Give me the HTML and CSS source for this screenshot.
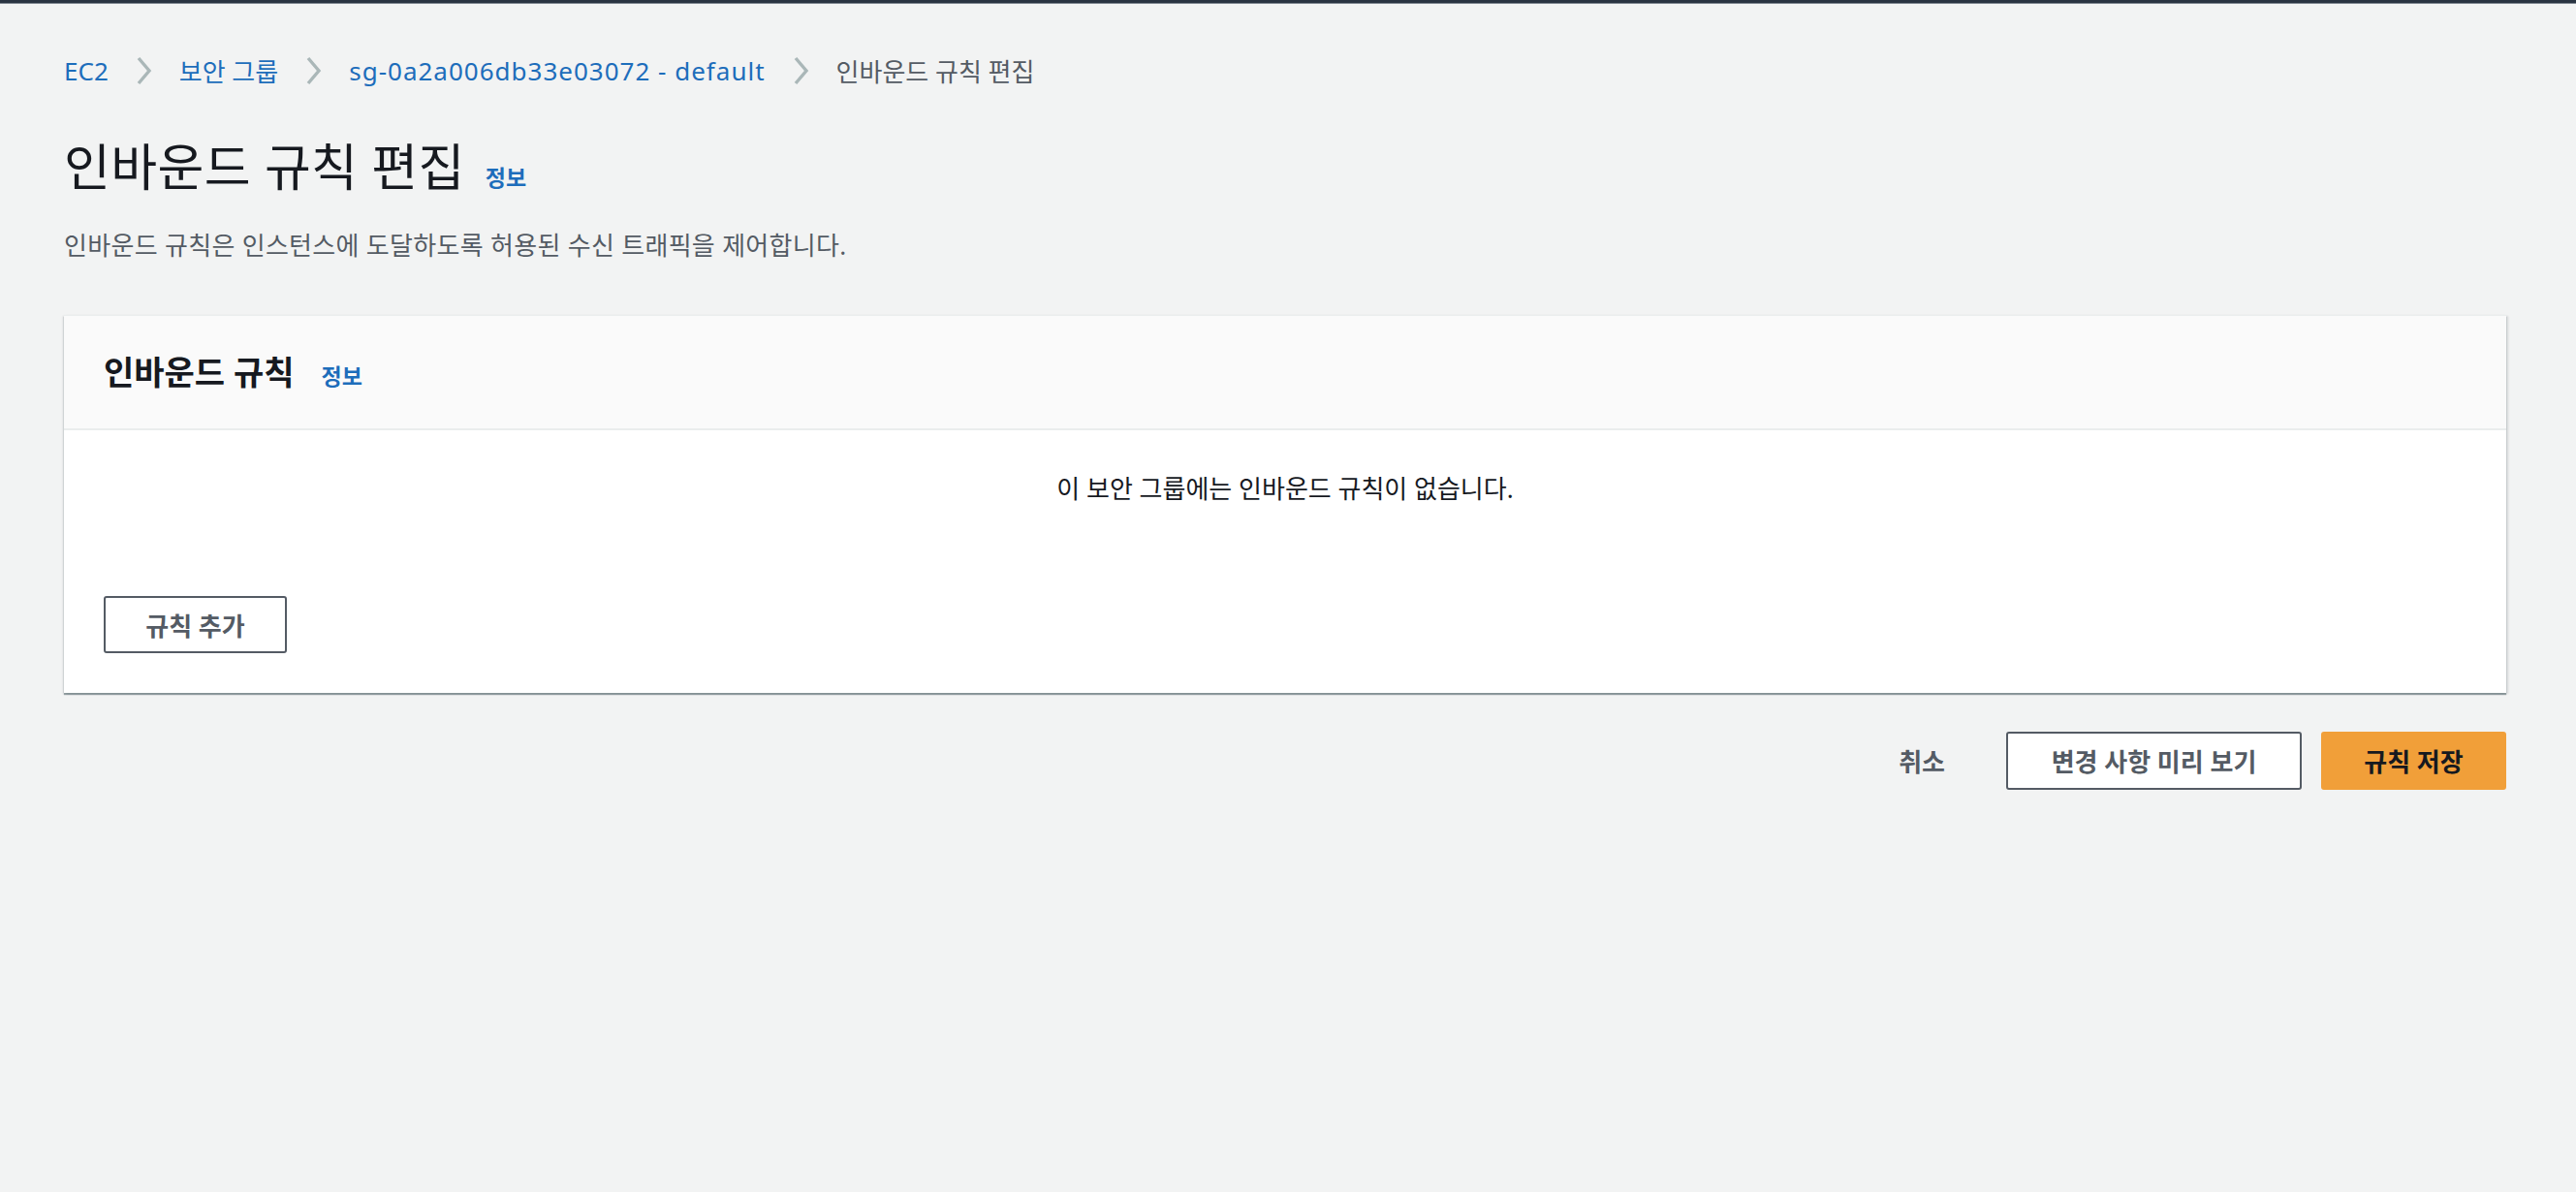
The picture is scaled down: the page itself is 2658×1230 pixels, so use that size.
FILE: index.html
```html
<!DOCTYPE html>
<html lang="ko">
<head>
<meta charset="utf-8">
<title>인바운드 규칙 편집</title>
<link rel="stylesheet" href="styles.css">
</head>
<body>
<div class="topbar"></div>
<main class="main">
  <nav class="breadcrumb">
    <a class="crumb-link" href="#">EC2</a>
    <svg class="chev" width="17" height="30" viewBox="0 0 17 30"><polyline points="3,2 14,15 3,28" fill="none" stroke="#aab7b8" stroke-width="3.4"/></svg>
    <a class="crumb-link" href="#">보안 그룹</a>
    <svg class="chev" width="17" height="30" viewBox="0 0 17 30"><polyline points="3,2 14,15 3,28" fill="none" stroke="#aab7b8" stroke-width="3.4"/></svg>
    <a class="crumb-link crumb-id" href="#">sg-0a2a006db33e03072 - default</a>
    <svg class="chev" width="17" height="30" viewBox="0 0 17 30"><polyline points="3,2 14,15 3,28" fill="none" stroke="#aab7b8" stroke-width="3.4"/></svg>
    <span class="crumb-current">인바운드 규칙 편집</span>
  </nav>

  <div class="page-head">
    <h1 class="title">인바운드 규칙 편집</h1>
    <a class="info" href="#">정보</a>
  </div>
  <p class="desc">인바운드 규칙은 인스턴스에 도달하도록 허용된 수신 트래픽을 제어합니다.</p>

  <section class="card">
    <div class="card-head">
      <h2 class="card-title">인바운드 규칙</h2>
      <a class="info info-card" href="#">정보</a>
    </div>
    <div class="card-body">
      <p class="empty">이 보안 그룹에는 인바운드 규칙이 없습니다.</p>
      <button class="btn btn-normal btn-add">규칙 추가</button>
    </div>
  </section>

  <div class="actions">
    <button class="btn btn-link">취소</button>
    <button class="btn btn-normal btn-preview">변경 사항 미리 보기</button>
    <button class="btn btn-primary">규칙 저장</button>
  </div>
</main>
</body>
</html>
```

FILE: styles.css
```css
html, body {
  margin: 0;
  padding: 0;
}
body {
  background: #f2f3f3;
  font-family: "Noto Sans", "Noto Sans CJK KR", sans-serif;
  color: #16191f;
  min-height: 1230px;
}
.topbar {
  height: 3px;
  background: #2a3441;
  border-bottom: 1px solid #7d858f;
}
.main {
  padding: 0 72px 0 66px;
}
.breadcrumb {
  display: flex;
  align-items: center;
  height: 34px;
  margin-top: 52px;
  font-size: 26px;
}
.crumb-link {
  color: #1d6dbb;
  text-decoration: none;
}
.crumb-id {
  letter-spacing: 1px;
}
.chev {
  margin: 0 28px;
  display: block;
}
.crumb-current {
  color: #545b64;
}
.page-head {
  display: flex;
  align-items: baseline;
  margin-top: 52px;
}
.title {
  margin: 0;
  font-size: 52px;
  font-weight: 400;
  line-height: 60px;
  letter-spacing: 0.4px;
  color: #16191f;
}
.info {
  color: #1d6dbb;
  font-size: 23px;
  font-weight: 700;
  text-decoration: none;
  margin-left: 21px;
  letter-spacing: 0;
}
.desc {
  margin: 34px 0 0;
  font-size: 26px;
  line-height: 34px;
  letter-spacing: 0.3px;
  color: #545b64;
}
.card {
  margin-top: 55px;
  background: #fff;
  border-top: 1px solid #eaeded;
  box-shadow: 0 2px 1px 0 rgba(0, 28, 36, 0.35), 2px 1px 2px 0 rgba(0, 28, 36, 0.12), -1px 1px 2px 0 rgba(0, 28, 36, 0.12);
}
.card-head {
  display: flex;
  align-items: baseline;
  padding: 0 41px;
  height: 116px;
  line-height: 116px;
  background: #fafafa;
  border-bottom: 2px solid #eaeded;
}
.card-title {
  margin: 0;
  font-size: 34px;
  font-weight: 700;
  color: #16191f;
}
.info-card {
  margin-left: 28px;
}
.card-body {
  padding: 43px 41px 41px;
}
.empty {
  margin: 0;
  text-align: center;
  font-size: 26px;
  line-height: 34px;
  color: #16191f;
}
.btn {
  font-family: inherit;
  font-size: 26px;
  font-weight: 700;
  box-sizing: border-box;
  height: 59px;
  border-radius: 3px;
  cursor: pointer;
}
.btn-normal {
  background: #fff;
  color: #545b64;
  border: 2px solid #545b64;
}
.btn-add {
  margin-top: 94px;
  width: 189px;
  display: block;
}
.actions {
  display: flex;
  justify-content: flex-end;
  align-items: center;
  gap: 20px;
  margin-top: 40px;
}
.btn-link {
  background: transparent;
  border: none;
  color: #545b64;
  padding: 0 43px;
  height: 60px;
}
.btn-preview {
  width: 305px;
  height: 60px;
}
.btn-primary {
  width: 191px;
  height: 60px;
  background: #f19f39;
  border: 2px solid #f19f39;
  color: #16191f;
}
```
